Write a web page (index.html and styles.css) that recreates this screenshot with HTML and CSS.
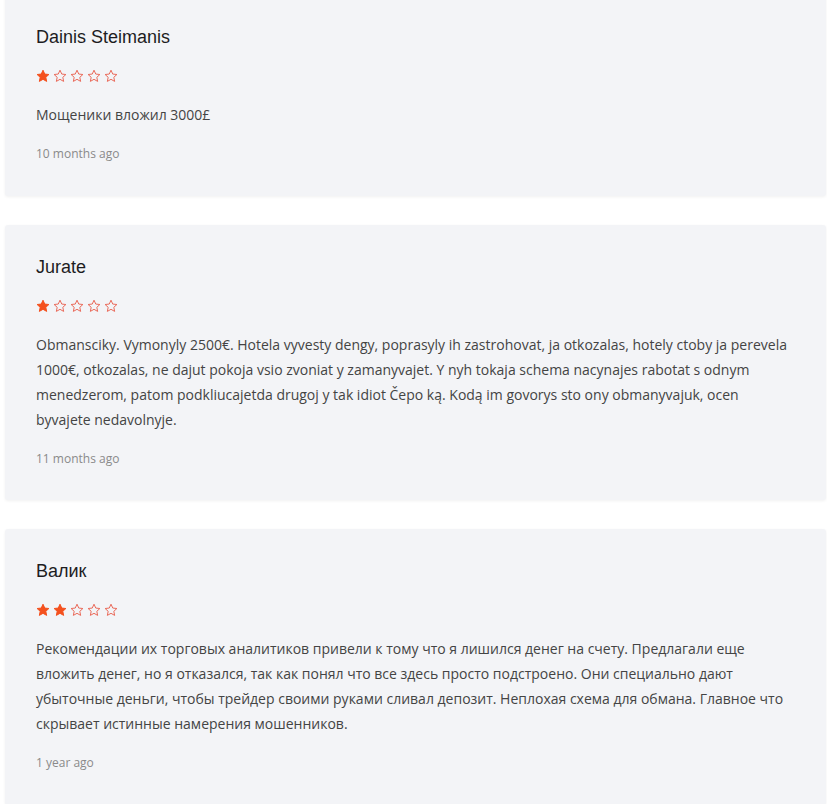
FILE: index.html
```html
<!DOCTYPE html>
<html lang="ru">
<head>
<meta charset="utf-8">
<title>Reviews</title>
<link rel="stylesheet" href="styles.css">
</head>
<body>
<svg width="0" height="0" class="defs" aria-hidden="true">
  <defs>
    <path id="star" d="M7 1.2 L8.75 5.05 L12.9 5.5 L9.8 8.3 L10.65 12.4 L7 10.3 L3.35 12.4 L4.2 8.3 L1.1 5.5 L5.25 5.05 Z"/>
  </defs>
</svg>
<div class="reviews">
  <div class="card">
    <div class="name">Dainis Steimanis</div>
    <div class="stars">
      <svg class="star full" viewBox="0 0 14 14"><use href="#star"/></svg>
      <svg class="star" viewBox="0 0 14 14"><use href="#star"/></svg>
      <svg class="star" viewBox="0 0 14 14"><use href="#star"/></svg>
      <svg class="star" viewBox="0 0 14 14"><use href="#star"/></svg>
      <svg class="star" viewBox="0 0 14 14"><use href="#star"/></svg>
    </div>
    <p class="text">Мощеники вложил 3000£</p>
    <div class="time">10 months ago</div>
  </div>
  <div class="card">
    <div class="name">Jurate</div>
    <div class="stars">
      <svg class="star full" viewBox="0 0 14 14"><use href="#star"/></svg>
      <svg class="star" viewBox="0 0 14 14"><use href="#star"/></svg>
      <svg class="star" viewBox="0 0 14 14"><use href="#star"/></svg>
      <svg class="star" viewBox="0 0 14 14"><use href="#star"/></svg>
      <svg class="star" viewBox="0 0 14 14"><use href="#star"/></svg>
    </div>
    <p class="text">Obmansciky. Vymonyly 2500€. Hotela vyvesty dengy, poprasyly ih zastrohovat, ja otkozalas, hotely ctoby ja perevela 1000€, otkozalas, ne dajut pokoja vsio zvoniat y zamanyvajet. Y nyh tokaja schema nacynajes rabotat s odnym menedzerom, patom podkliucajetda drugoj y tak idiot Čepo ką. Kodą im govorys sto ony obmanyvajuk, ocen byvajete nedavolnyje.</p>
    <div class="time">11 months ago</div>
  </div>
  <div class="card">
    <div class="name">Валик</div>
    <div class="stars">
      <svg class="star full" viewBox="0 0 14 14"><use href="#star"/></svg>
      <svg class="star full" viewBox="0 0 14 14"><use href="#star"/></svg>
      <svg class="star" viewBox="0 0 14 14"><use href="#star"/></svg>
      <svg class="star" viewBox="0 0 14 14"><use href="#star"/></svg>
      <svg class="star" viewBox="0 0 14 14"><use href="#star"/></svg>
    </div>
    <p class="text">Рекомендации их торговых аналитиков привели к тому что я лишился денег на счету. Предлагали еще вложить денег, но я отказался, так как понял что все здесь просто подстроено. Они специально дают убыточные деньги, чтобы трейдер своими руками сливал депозит. Неплохая схема для обмана. Главное что скрывает истинные намерения мошенников.</p>
    <div class="time">1 year ago</div>
  </div>
</div>
</body>
</html>
```
FILE: styles.css
```css
html, body {
  margin: 0;
  padding: 0;
  background: #ffffff;
}

body {
  overflow: hidden;
}

.defs {
  position: absolute;
  width: 0;
  height: 0;
}

.reviews {
  display: flex;
  flex-direction: column;
  gap: 29px;
  margin-top: -5px;
  padding: 0 1px 0 5px;
}

.card {
  background: #f3f4f7;
  border-radius: 3px;
  box-shadow: 0 1px 3px rgba(0, 0, 0, 0.06);
  padding: 30px 31px 31.5px 31px;
}

.name {
  font-family: "Liberation Sans", Arial, sans-serif;
  font-size: 18px;
  line-height: 24px;
  color: #1d1d1f;
}

.stars {
  display: flex;
  gap: 3px;
  margin-top: 19px;
  height: 16px;
  align-items: center;
}

.star {
  width: 14px;
  height: 14px;
  display: block;
  fill: none;
  stroke: #ea6a5a;
  stroke-width: 1;
  stroke-linejoin: round;
}

.star.full {
  fill: #f4511e;
  stroke: #f4511e;
}

.text {
  margin: 18px 0 0 0;
  font-family: "Open Sans", sans-serif;
  font-size: 14px;
  line-height: 25px;
  color: #444444;
}

.time {
  margin-top: 17px;
  font-family: "Open Sans", sans-serif;
  font-size: 12px;
  line-height: 20px;
  color: #8a8a8a;
}
```
